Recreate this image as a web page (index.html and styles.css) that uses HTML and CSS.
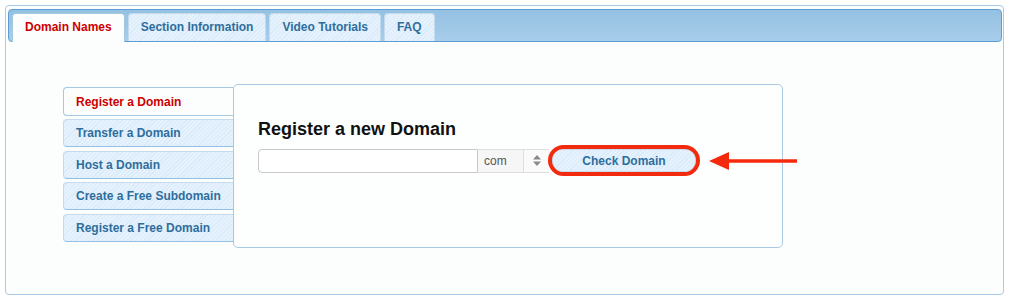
FILE: index.html
```html
<!DOCTYPE html>
<html lang="en">
<head>
    <meta charset="UTF-8">
    <title>Domain Names</title>
    <link rel="stylesheet" href="styles.css">
</head>
<body>
    <div class="tabs">
        <ul class="tab-nav">
            <li class="tab active">Domain Names</li>
            <li class="tab">Section Information</li>
            <li class="tab">Video Tutorials</li>
            <li class="tab">FAQ</li>
        </ul>

        <div class="tab-body">
            <ul class="side-nav">
                <li class="side-item active">Register a Domain</li>
                <li class="side-item">Transfer a Domain</li>
                <li class="side-item">Host a Domain</li>
                <li class="side-item">Create a Free Subdomain</li>
                <li class="side-item">Register a Free Domain</li>
            </ul>

            <div class="panel">
                <h2 class="panel-title">Register a new Domain</h2>
                <div class="search-row">
                    <input class="domain-input" type="text">
                    <div class="tld">
                        <span class="tld-value">com</span>
                        <span class="tld-arrows">
                            <svg width="8" height="11" viewBox="0 0 8 11">
                                <path d="M4 0 L8 4.5 L0 4.5 Z M0 6.5 L8 6.5 L4 11 Z" fill="#8a8a8a"/>
                            </svg>
                        </span>
                    </div>
                    <span class="check-wrap">
                        <button class="check-btn">Check Domain</button>
                    </span>
                    <svg class="pointer" width="90" height="22" viewBox="0 0 90 22">
                        <path d="M1 11 L21 2 L21 20 Z" fill="#f52a0c"/>
                        <line x1="19" y1="11" x2="89" y2="11" stroke="#f52a0c" stroke-width="3.5"/>
                    </svg>
                </div>
            </div>
        </div>
    </div>
</body>
</html>
```

FILE: styles.css
```css
body {
    margin: 0;
    padding: 5px;
    background: #fff;
    font-family: "Liberation Sans", Arial, sans-serif;
    font-size: 12px;
}

ul {
    list-style: none;
    margin: 0;
    padding: 0;
}

/* 外枠 */
.tabs {
    width: 999px;
    height: 290px;
    box-sizing: border-box;
    border: 1px solid #a9cbe6;
    border-radius: 4px;
    padding: 3px 1px 3px 2px;
    background: #fcfdfd;
}

/* 上のタブ */
.tab-nav {
    display: flex;
    align-items: flex-start;
    gap: 3px;
    padding: 3px 3px 0;
    border: 1px solid #5c9dd6;
    border-radius: 4px;
    background: linear-gradient(#95c1e2, #a7cdea);
}

.tab {
    height: 28px;
    line-height: 27px;
    padding: 0 12px;
    box-sizing: border-box;
    border: 1px solid #c5dbec;
    border-bottom: none;
    border-radius: 4px 4px 0 0;
    font-weight: bold;
    color: #2e6e9e;
    background: repeating-linear-gradient(135deg, #e5f1fc 0 2px, #d9eaf9 2px 3px);
}

.tab.active {
    height: 29px;
    margin-bottom: -1px;
    color: #cc0000;
    background: #fcfdfd;
    border-color: #a6c9e2;
}

/* 中身 */
.tab-body {
    display: flex;
    align-items: flex-start;
    padding: 42px 0 0 55px;
}

.side-nav {
    width: 170px;
    flex-shrink: 0;
    margin-top: 3px;
}

.side-item {
    height: 28px;
    line-height: 27px;
    margin-bottom: 3.7px;
    padding-left: 12px;
    box-sizing: border-box;
    border: 1px solid #c5dbec;
    border-bottom-color: #93c0e6;
    border-right: none;
    border-radius: 4px 0 0 4px;
    font-weight: bold;
    color: #2e6e9e;
    background: repeating-linear-gradient(135deg, #e5f1fc 0 2px, #d9eaf9 2px 3px);
}

.side-item.active {
    height: 29px;
    line-height: 28px;
    margin-bottom: 3px;
    color: #cc0000;
    background: #fcfdfd;
    border-color: #a6c9e2;
}

.panel {
    width: 550px;
    height: 164px;
    flex-shrink: 0;
    box-sizing: border-box;
    border: 1px solid #a9c9e3;
    border-radius: 5px;
    padding: 34px 0 0 24px;
    background: #fdfefe;
}

.panel-title {
    margin: 0 0 5px;
    font-size: 18px;
    line-height: 21px;
    font-weight: bold;
    color: #111;
}

.search-row {
    display: flex;
    align-items: center;
    height: 31px;
}

.search-row > * {
    flex-shrink: 0;
}

.domain-input {
    width: 220px;
    height: 24px;
    box-sizing: border-box;
    margin: 0;
    border: 1px solid #c8c8c8;
    border-radius: 4px 0 0 4px;
    background: #fff;
    outline: none;
}

.tld {
    display: flex;
    height: 24px;
    box-sizing: border-box;
    border: 1px solid #dedede;
    border-left: none;
    border-right: none;
    background: #f6f6f6;
}

.tld-value {
    width: 46px;
    padding-left: 6px;
    box-sizing: border-box;
    line-height: 22px;
    color: #555;
    border-right: 1px solid #dedede;
}

.tld-arrows {
    width: 25px;
    display: flex;
    align-items: center;
    justify-content: center;
    background: #fafafa;
}

.check-wrap {
    position: relative;
    margin-left: 3px;
}

/* 赤い丸の注釈 */
.check-wrap::after {
    content: "";
    position: absolute;
    top: -4px;
    left: -4px;
    right: -4px;
    bottom: -4px;
    border: 4px solid #f22a0e;
    border-radius: 16px;
}

.check-btn {
    display: block;
    width: 144px;
    height: 23px;
    border: 1px solid #c5dbec;
    border-radius: 10px;
    font-family: inherit;
    font-size: 12px;
    font-weight: bold;
    color: #2e6e9e;
    background: repeating-linear-gradient(135deg, #e5f1fc 0 2px, #d9eaf9 2px 3px);
    cursor: pointer;
}

.pointer {
    margin-left: 12px;
}
```
